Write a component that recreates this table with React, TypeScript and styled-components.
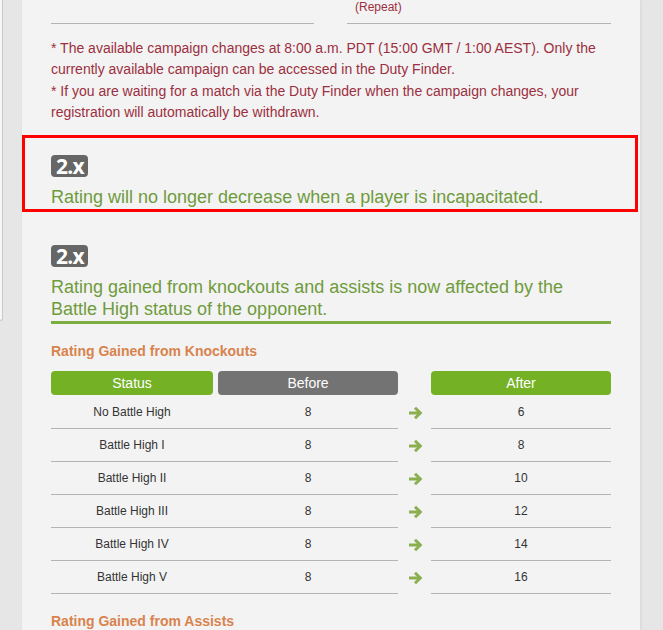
import React from 'react';
import styled, { createGlobalStyle } from 'styled-components';

const rows = [
  { status: 'No Battle High', before: 8, after: 6 },
  { status: 'Battle High I', before: 8, after: 8 },
  { status: 'Battle High II', before: 8, after: 10 },
  { status: 'Battle High III', before: 8, after: 12 },
  { status: 'Battle High IV', before: 8, after: 14 },
  { status: 'Battle High V', before: 8, after: 16 },
];

const Arrow = () => (
  <svg width="15" height="14" viewBox="0 0 15 14">
    <path d="M1 7 H12" stroke="#8aaf4f" strokeWidth="3" fill="none" />
    <path d="M7 1.8 L12.3 7 L7 12.2" stroke="#8aaf4f" strokeWidth="3" fill="none" />
  </svg>
);

const App: React.FC = () => {
  return (
    <>
      <GlobalStyle />
      <Page>
        <LeftRail />
        <Panel>
          <TopRow>
            <TopCell />
            <TopCell>(Repeat)</TopCell>
          </TopRow>

          <Notes>
            <p>* The available campaign changes at 8:00 a.m. PDT (15:00 GMT / 1:00 AEST). Only the currently available campaign can be accessed in the Duty Finder.</p>
            <p>* If you are waiting for a match via the Duty Finder when the campaign changes, your registration will automatically be withdrawn.</p>
          </Notes>

          <Highlight>
            <Badge>2.x</Badge>
            <ChangeText>Rating will no longer decrease when a player is incapacitated.</ChangeText>
          </Highlight>

          <Change>
            <Badge>2.x</Badge>
            <ChangeText>Rating gained from knockouts and assists is now affected by the Battle High status of the opponent.</ChangeText>
          </Change>

          <SubHeading>Rating Gained from Knockouts</SubHeading>
          <Table>
            <Row>
              <LeftGroup>
                <HeadCell tone="green">Status</HeadCell>
                <HeadCell tone="gray">Before</HeadCell>
              </LeftGroup>
              <ArrowCell />
              <AfterGroup>
                <HeadCell tone="green">After</HeadCell>
              </AfterGroup>
            </Row>
            {rows.map((item) => (
              <Row key={item.status}>
                <LeftGroup bordered>
                  <Cell>{item.status}</Cell>
                  <Cell>{item.before}</Cell>
                </LeftGroup>
                <ArrowCell>
                  <Arrow />
                </ArrowCell>
                <AfterGroup bordered>
                  <Cell>{item.after}</Cell>
                </AfterGroup>
              </Row>
            ))}
          </Table>

          <SubHeading>Rating Gained from Assists</SubHeading>
        </Panel>
      </Page>
    </>
  );
};

const GlobalStyle = createGlobalStyle`
  body {
    margin: 0;
    background: #e6e6e6;
    font-family: "Liberation Sans", Arial, sans-serif;
  }
`;

const Page = styled.div`
  display: flex;
  align-items: flex-start;
  gap: 19px;
  height: 630px;
  overflow: hidden;
`;

const LeftRail = styled.div`
  width: 2px;
  height: 320px;
  background: #f7f7f7;
  border-right: 1px solid #c9c9c9;
  border-bottom: 1px solid #c9c9c9;
  border-bottom-right-radius: 3px;
`;

const Panel = styled.div`
  width: 560px;
  padding: 0 29px 40px;
  background: #f3f3f3;
  box-shadow: 1px 0 3px rgba(0, 0, 0, 0.07);
`;

const TopRow = styled.div`
  display: grid;
  grid-template-columns: 263px 264px;
  column-gap: 33px;
`;

const TopCell = styled.div`
  height: 23px;
  border-bottom: 1px solid #b4b4b4;
  padding-left: 8px;
  font-size: 12px;
  line-height: 15px;
  color: #9c2f40;
`;

const Notes = styled.div`
  margin-top: 14px;
  font-size: 14px;
  line-height: 21.3px;
  color: #9c2f40;
  p {
    margin: 0;
  }
`;

const Highlight = styled.section`
  margin: 12px -27px 0 -29px;
  padding: 17px 24px 1px 26px;
  border: 3px solid #ff0000;
`;

const Change = styled.section`
  margin-top: 33px;
  padding-bottom: 1px;
  border-bottom: 3px solid #7cae3f;
`;

const Badge = styled.div`
  display: inline-block;
  height: 22px;
  padding: 0 4px 0 5px;
  border-radius: 4px;
  background: #666666;
  color: #ffffff;
  font-family: "Open Sans", "Noto Sans", sans-serif;
  font-weight: 700;
  font-size: 21px;
  line-height: 22px;
  letter-spacing: -0.8px;
  vertical-align: top;
`;

const ChangeText = styled.div`
  margin-top: 9px;
  font-size: 18px;
  line-height: 22px;
  color: #6f9b3c;
`;

const SubHeading = styled.h3`
  margin: 19px 0 0;
  font-size: 14px;
  line-height: 17px;
  font-weight: 700;
  color: #d8834d;
`;

const Table = styled.div`
  margin-top: 11px;
  display: flex;
  flex-direction: column;
  & > :first-child {
    margin-bottom: 1px;
  }
`;

const Row = styled.div`
  display: flex;
`;

const LeftGroup = styled.div<{ bordered?: boolean }>`
  width: 347px;
  display: grid;
  grid-template-columns: 162px 180px;
  column-gap: 5px;
  border-bottom: ${({ bordered }) => (bordered ? '1px solid #b4b4b4' : 'none')};
`;

const AfterGroup = styled.div<{ bordered?: boolean }>`
  width: 180px;
  display: flex;
  border-bottom: ${({ bordered }) => (bordered ? '1px solid #b4b4b4' : 'none')};
`;

const ArrowCell = styled.div`
  width: 33px;
  display: flex;
  align-items: center;
  justify-content: center;
  padding-left: 1px;
  box-sizing: border-box;
`;

const HeadCell = styled.div<{ tone: 'green' | 'gray' }>`
  flex: 1;
  height: 24px;
  line-height: 25px;
  border-radius: 4px;
  text-align: center;
  font-size: 14px;
  color: #ffffff;
  background: ${({ tone }) => (tone === 'green' ? '#74b125' : '#737373')};
`;

const Cell = styled.div`
  flex: 1;
  height: 32px;
  line-height: 33px;
  text-align: center;
  font-size: 12px;
  color: #333333;
`;

export default App;
